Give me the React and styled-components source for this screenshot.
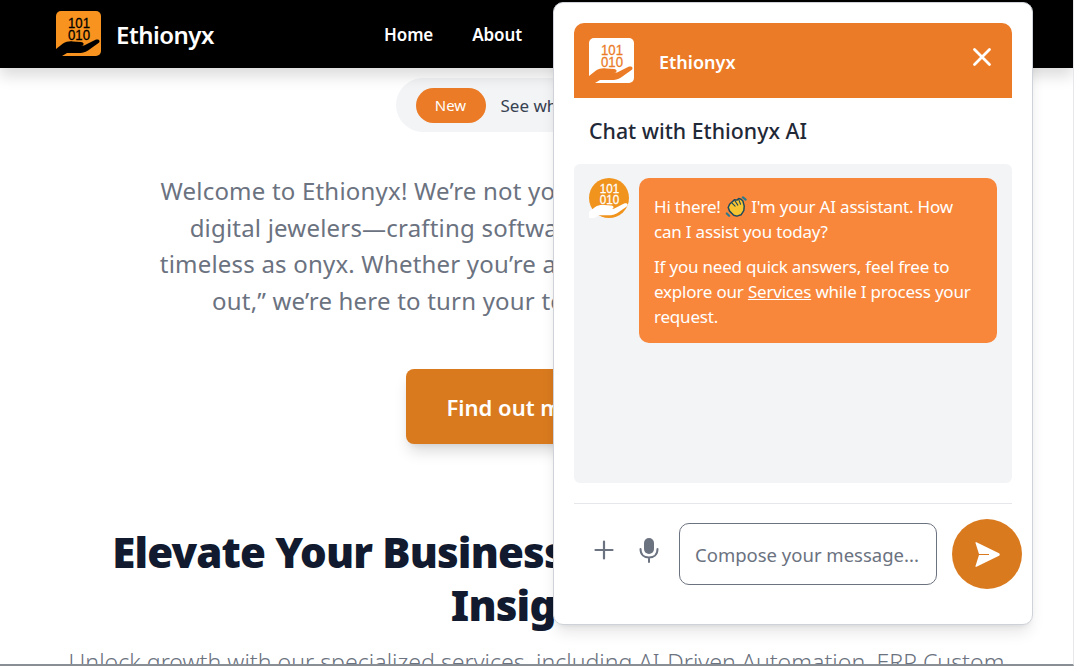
import React from 'react'
import styled, { createGlobalStyle } from 'styled-components'

const FONT = `"Noto Sans", "Open Sans", sans-serif`

const GlobalStyle = createGlobalStyle`
  html, body {
    margin: 0;
    height: 100%;
    overflow: hidden;
    background: #fff;
    font-family: ${FONT};
  }
  * { box-sizing: border-box; }
`

function BrandMark({ size = 45, bg, fg, round }) {
  return (
    <svg width={size} height={size} viewBox="0 0 45 45" style={{ display: 'block', flexShrink: 0 }}>
      {round ? <circle cx="22.5" cy="22.5" r="22.5" fill={bg} /> : <rect width="45" height="45" rx="5" fill={bg} />}
      <text x="23" y="17" textAnchor="middle" fontFamily="Liberation Sans, sans-serif" fontSize="15" fill={fg} stroke={fg} strokeWidth="0.3" textLength="22" lengthAdjust="spacingAndGlyphs">101</text>
      <text x="23" y="29" textAnchor="middle" fontFamily="Liberation Sans, sans-serif" fontSize="15" fill={fg} stroke={fg} strokeWidth="0.3" textLength="22" lengthAdjust="spacingAndGlyphs">010</text>
      <path d="M0 38 L7 32.5 C10 30.5 14 30 17 30.5 L25 31 C28.5 31.3 28.5 34.6 25 34.8 L19 35.2 L28 34.6 L39.5 28.8 C43 27.5 44.8 30.3 42.5 32 L32 39.5 C29 41.5 26 42 22 42 L11 42 L6 45 L0 45 Z" fill={fg} />
    </svg>
  )
}

function WaveHand() {
  return (
    <WaveSvg viewBox="0 0 24 24" width="22" height="22">
      <path d="M5 9 L10.5 4 L13 4.5 L15 2.8 L17.5 3.5 L19.5 5.5 L21 11 L20.5 16 L17.5 20.5 L13 22 L9.5 21 L5 16.5 L3.5 12.5 Z" fill="#f7c531" stroke="#1d4a5c" strokeWidth="1.6" strokeLinejoin="round" />
      <path d="M8 8 L11 11 M11 5.5 L14 10 M15 4 L17 9" stroke="#1d4a5c" strokeWidth="1.2" strokeLinecap="round" fill="none" />
      <path d="M2 19 L4.5 21.5 M19.5 1.5 L22.5 4" stroke="#2d7a8c" strokeWidth="2.4" strokeLinecap="round" fill="none" />
    </WaveSvg>
  )
}

export default function App() {
  return (
    <>
      <GlobalStyle />
      <Page>
        <Nav>
          <BrandMark bg="#f7931e" fg="#000" />
          <Brand>Ethionyx</Brand>
          <NavLinks>
            <NavLink>Home</NavLink>
            <NavLink>About</NavLink>
            <NavLink>Services</NavLink>
            <NavLink>Contact</NavLink>
          </NavLinks>
        </Nav>

        <Main>
          <Pill>
            <PillBadge>New</PillBadge>
            <PillText>See what’s new</PillText>
          </Pill>
          <Intro>
            Welcome to Ethionyx! We’re not your typical tech company—we’re<br />
            digital jewelers—crafting software solutions as exquisite and<br />
            timeless as onyx. Whether you’re a startup or giant keen to “stand<br />
            out,” we’re here to turn your tech dreams into real gems.
          </Intro>
          <CtaButton>Find out more</CtaButton>
          <Heading>
            Elevate Your Business: Smart Solutions &amp;<br />
            Insights
          </Heading>
          <SubText>
            Unlock growth with our specialized services, including AI-Driven Automation, ERP Custom
          </SubText>
        </Main>

        <ChatPanel>
          <ChatHeader>
            <BrandMark bg="#fff" fg="#eb7b26" />
            <ChatTitle>Ethionyx</ChatTitle>
            <CloseButton>
              <svg width="20" height="20" viewBox="0 0 20 20" fill="none" stroke="#fff" strokeWidth="2.8" strokeLinecap="round">
                <path d="M2.5 2.5 L17.5 17.5 M17.5 2.5 L2.5 17.5" />
              </svg>
            </CloseButton>
          </ChatHeader>
          <ChatHeading>Chat with Ethionyx AI</ChatHeading>
          <Messages>
            <BrandMark size={40} round bg="#f0941e" fg="#fff" />
            <Bubble>
              <BubbleLine>Hi there! <WaveHand /> I'm your AI assistant. How can I assist you today?</BubbleLine>
              <BubbleLine>
                If you need quick answers, feel free to explore our <BubbleLink>Services</BubbleLink> while I process your request.
              </BubbleLine>
            </Bubble>
          </Messages>
          <Composer>
            <ToolButton>
              <svg width="20" height="20" viewBox="0 0 20 20" fill="none" stroke="#6b7280" strokeWidth="2.2" strokeLinecap="round">
                <path d="M10 1.5 V18.5 M1.5 10 H18.5" />
              </svg>
            </ToolButton>
            <ToolButton>
              <svg width="20" height="26" viewBox="0 0 20 26">
                <rect x="5" y="1" width="10" height="16" rx="5" fill="#6b7280" />
                <path d="M1.5 12 C1.5 18 5.5 20.5 10 20.5 C14.5 20.5 18.5 18 18.5 12 M10 20.5 V25" fill="none" stroke="#6b7280" strokeWidth="2" strokeLinecap="round" />
              </svg>
            </ToolButton>
            <MessageInput placeholder="Compose your message..." />
            <SendButton>
              <svg width="26" height="25" viewBox="0 0 26 25">
                <path d="M1.5 1 C1 0.3 2 0 3 0.4 L25 11.2 C26 11.8 26 13.2 25 13.8 L3 24.6 C2 25 1 24.7 1.5 24 L5 13.1 H15 V11.9 H5 Z" fill="#fff" />
              </svg>
            </SendButton>
          </Composer>
        </ChatPanel>
      </Page>
    </>
  )
}

const Page = styled.div`
  position: relative;
  height: 666px;
  overflow: hidden;
  background: #fff;
  border-bottom: 2px solid #8a8f96;
  border-right: 1px solid #e5e7eb;
`

const Nav = styled.nav`
  height: 68px;
  background: #000;
  display: flex;
  align-items: center;
  padding: 0 0 2px 56px;
  box-shadow: 0 8px 14px rgba(0, 0, 0, 0.14);
  position: relative;
`

const Brand = styled.span`
  margin: 2px 0 0 15px;
  color: #fff;
  font-size: 24px;
  font-weight: 600;
  letter-spacing: -0.5px;
  width: 99px;
  white-space: nowrap;
`

const NavLinks = styled.div`
  display: flex;
  gap: 39px;
  margin: 2px 0 0 169px;
`

const NavLink = styled.a`
  color: #fff;
  font-size: 17px;
  font-weight: 600;
  letter-spacing: -0.1px;
`

const Main = styled.main`
  display: flex;
  flex-direction: column;
  align-items: center;
  padding-top: 10px;
`

const Pill = styled.div`
  display: flex;
  align-items: center;
  height: 54px;
  padding: 0 20px;
  gap: 15px;
  background: #f3f4f6;
  border-radius: 27px;
`

const PillBadge = styled.span`
  width: 70px;
  height: 35px;
  border-radius: 18px;
  background: #eb7b26;
  color: #fff;
  font-size: 15px;
  display: flex;
  align-items: center;
  justify-content: center;
`

const PillText = styled.span`
  width: 157px;
  color: #374151;
  font-size: 17px;
  white-space: nowrap;
`

const Intro = styled.p`
  margin: 41px 0 0;
  color: #6b7280;
  font-size: 24px;
  line-height: 36.5px;
  letter-spacing: 0.2px;
  text-align: center;
  white-space: nowrap;
`

const CtaButton = styled.button`
  margin-top: 50px;
  width: 262px;
  height: 75px;
  padding: 0 0 0 41px;
  border: none;
  border-radius: 8px;
  background: #d97a1e;
  color: #fff;
  font-family: ${FONT};
  font-size: 22px;
  font-weight: 600;
  text-align: left;
  box-shadow: 0 10px 15px -3px rgba(0, 0, 0, 0.15), 0 4px 6px -4px rgba(0, 0, 0, 0.1);
`

const Heading = styled.h1`
  margin: 81px 0 0;
  color: #111a2e;
  font-size: 42px;
  font-weight: 900;
  line-height: 53px;
  letter-spacing: -0.85px;
  text-align: center;
  white-space: nowrap;
`

const SubText = styled.p`
  margin: 15px 0 0;
  color: #6b7280;
  font-size: 23.2px;
  font-weight: 300;
  white-space: nowrap;
`

const ChatPanel = styled.aside`
  position: absolute;
  left: 553px;
  top: 2px;
  width: 480px;
  height: 623px;
  display: flex;
  flex-direction: column;
  padding: 20px;
  background: #fff;
  border: 1px solid #cfd3d9;
  border-radius: 10px;
  box-shadow: 0 10px 15px -3px rgba(0, 0, 0, 0.1), 0 4px 6px -4px rgba(0, 0, 0, 0.1);
`

const ChatHeader = styled.header`
  height: 75px;
  flex-shrink: 0;
  display: flex;
  align-items: center;
  padding: 0 15px;
  background: #eb7b26;
  border-radius: 10px 10px 0 0;
`

const ChatTitle = styled.h2`
  margin: 2px 0 0 25px;
  flex: 1;
  color: #fff;
  font-size: 18px;
  font-weight: 600;
`

const CloseButton = styled.span`
  display: flex;
  margin: 0 5px 8px 0;
`

const ChatHeading = styled.h3`
  margin: 0;
  height: 66px;
  padding: 16px 15px 0;
  color: #1f2937;
  font-size: 21.3px;
  font-weight: 500;
  line-height: 34px;
`

const Messages = styled.div`
  height: 319px;
  flex-shrink: 0;
  display: flex;
  align-items: flex-start;
  gap: 10px;
  padding: 14px 15px;
  background: #f3f4f6;
  border-radius: 6px;
`

const Bubble = styled.div`
  flex: 1;
  padding: 16px 15px 4px;
  background: #f8873c;
  border-radius: 10px;
  color: #fff;
  font-size: 17px;
  letter-spacing: -0.2px;
  line-height: 25px;
`

const BubbleLine = styled.p`
  margin: 0 0 10px;
`

const BubbleLink = styled.a`
  color: #fff;
  text-decoration: underline;
`

const WaveSvg = styled.svg`
  vertical-align: -5px;
`

const Composer = styled.div`
  display: flex;
  align-items: center;
  margin-top: 20px;
  padding: 15px 0 0 20px;
  border-top: 1px solid #e5e7eb;
`

const ToolButton = styled.span`
  width: 20px;
  display: flex;
  justify-content: center;
  margin-right: 25px;
  position: relative;
  top: -4px;
  &:nth-of-type(2) { margin-right: 20px; }
`

const MessageInput = styled.input`
  width: 258px;
  height: 62px;
  padding: 0 15px;
  border: 1px solid #6b7280;
  border-radius: 10px;
  font-family: ${FONT};
  font-size: 18.5px;
  color: #374151;
  outline: none;
  &::placeholder { color: #6b7280; opacity: 1; }
`

const SendButton = styled.span`
  width: 70px;
  height: 70px;
  flex-shrink: 0;
  margin: 0 -10px 0 15px;
  border-radius: 50%;
  background: #da7a1f;
  display: flex;
  align-items: center;
  justify-content: center;
`
